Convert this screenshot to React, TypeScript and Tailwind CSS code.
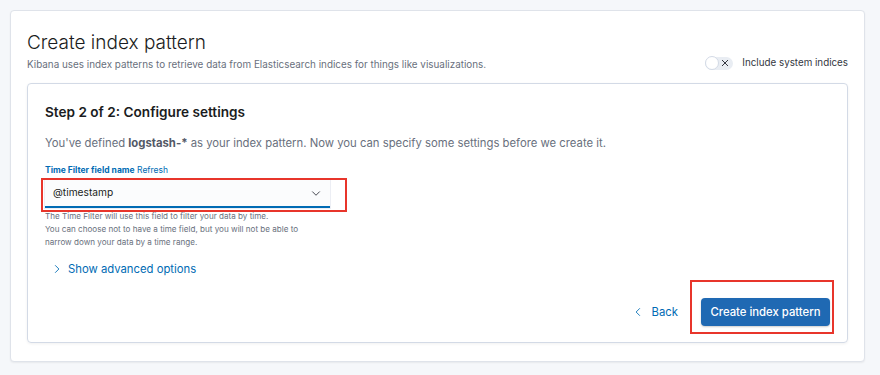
import React from 'react';

function ChevronDown() {
  return (
    <svg width="12" height="12" viewBox="0 0 16 16" fill="none" stroke="#343741" strokeWidth="1.2">
      <path d="M3 6l5 5 5-5" />
    </svg>
  );
}

function ChevronSide({ dir }: { dir: 'left' | 'right' }) {
  return (
    <svg width="10" height="10" viewBox="0 0 16 16" fill="none" stroke="#006bb4" strokeWidth="1.4">
      {dir === 'right' ? <path d="M5 2l6 6-6 6" /> : <path d="M11 2l-6 6 6 6" />}
    </svg>
  );
}

export default function App() {
  return (
    <div className="w-[880px] h-[375px] bg-[#f5f7fa] pt-[10px] pl-[10px] font-['Inter',sans-serif]">
      <div className="w-[855px] h-[352px] bg-white border border-[#dfe3ea] rounded-[4px] shadow-[0_1px_2px_rgba(0,0,0,0.06)] px-[16px] pt-[18px]">
        <div className="flex items-end justify-between">
          <div>
            <h1 className="text-[19px] leading-[28px] font-light text-[#1a1c21]">Create index pattern</h1>
            <p className="text-[9.9px] leading-[14px] text-[#69707d]">
              Kibana uses index patterns to retrieve data from Elasticsearch indices for things like visualizations.
            </p>
          </div>
          <div className="flex items-center gap-[9px] mb-[1px]">
            <div className="relative w-[28px] h-[13px] rounded-full bg-[#e9edf3] flex items-center">
              <div className="absolute left-0 top-0 w-[14px] h-[14px] -mt-[0.5px] rounded-full bg-white border border-[#d3dae6]" />
              <svg className="absolute right-[4px]" width="8" height="8" viewBox="0 0 8 8" stroke="#343741" strokeWidth="1">
                <path d="M1 1l6 6M7 1l-6 6" />
              </svg>
            </div>
            <span className="text-[9.8px] leading-[14px] text-[#343741]">Include system indices</span>
          </div>
        </div>

        <div className="mt-[12px] border border-[#d3dae6] rounded-[4px] shadow-[0_1px_3px_rgba(0,0,0,0.06)] px-[17px] pt-[18px] pb-[16px]">
          <h2 className="text-[13.6px] leading-[20px] font-semibold text-[#1a1c21]">Step 2 of 2: Configure settings</h2>
          <p className="mt-[12px] text-[11.3px] leading-[18px] text-[#69707d]">
            You've defined <span className="font-bold text-[#535966]">logstash-*</span> as your index pattern. Now you can specify some settings before we create it.
          </p>
          <div className="mt-[12px] text-[8.5px] leading-[12px] text-[#006bb4]">
            <span className="font-bold">Time Filter field name</span> <span>Refresh</span>
          </div>
          <div className="relative mt-[4px] w-[285px]">
            <div className="h-[28px] bg-[#fbfcfd] border-b-2 border-[#006bb4] shadow-[0_0_0_1px_rgba(15,39,118,0.08)] flex items-center justify-between pl-[8px] pr-[8px]">
              <span className="text-[10.2px] text-[#1a1c21]">@timestamp</span>
              <ChevronDown />
            </div>
            <div className="absolute -left-[4px] -top-[2px] w-[306px] h-[34px] border-2 border-[#e8352b]" />
          </div>
          <div className="mt-[2px] text-[8.1px] leading-[13px] text-[#69707d]">
            <div>The Time Filter will use this field to filter your data by time.</div>
            <div>You can choose not to have a time field, but you will not be able to</div>
            <div>narrow down your data by a time range.</div>
          </div>
          <div className="mt-[11px] flex items-center gap-[6px] pl-[7px] text-[11.3px] leading-[18px] text-[#006bb4]">
            <ChevronSide dir="right" />
            <span>Show advanced options</span>
          </div>
          <div className="mt-[20px] flex items-center justify-end gap-[23px]">
            <div className="flex items-center gap-[9px] text-[11.3px] text-[#006bb4]">
              <ChevronSide dir="left" />
              <span>Back</span>
            </div>
            <div className="relative">
              <button className="h-[28px] w-[129px] rounded-[4px] bg-[#1f69b3] text-white text-[11.3px] font-medium shadow-[0_1px_2px_rgba(0,0,0,0.2)]">
                Create index pattern
              </button>
              <div className="absolute -left-[11px] -top-[18px] -right-[4px] -bottom-[8px] border-2 border-[#e8352b]" />
            </div>
          </div>
        </div>
      </div>
    </div>
  );
}
